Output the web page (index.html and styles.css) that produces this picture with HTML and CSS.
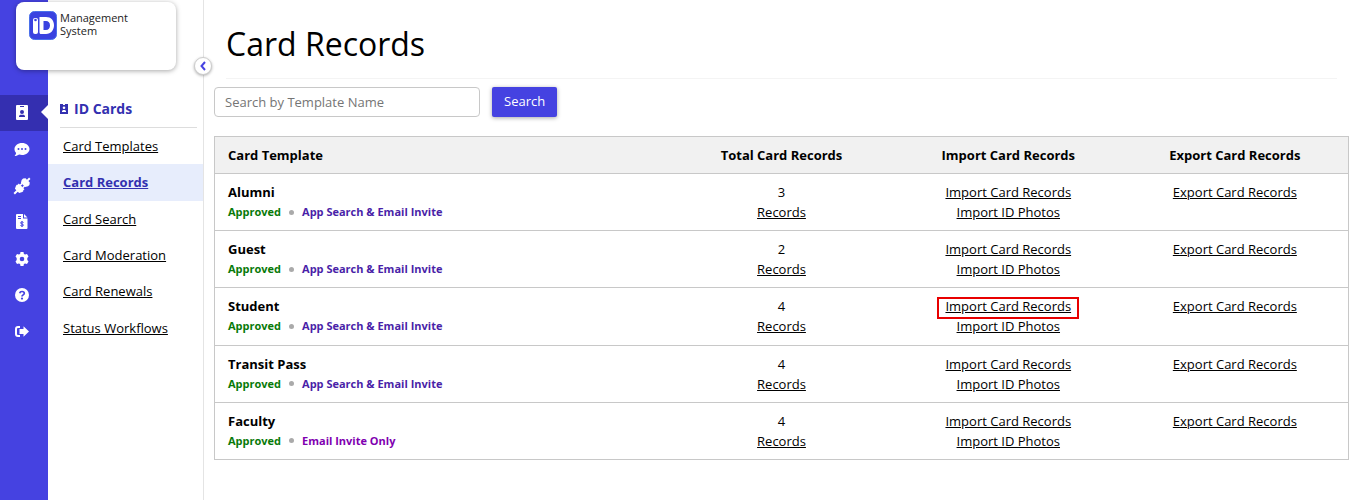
FILE: index.html
```html
<!DOCTYPE html>
<html lang="en">
<head>
    <meta charset="utf-8">
    <title>Card Records</title>
    <link rel="stylesheet" href="styles.css">
</head>
<body>
    <div class="rail">
        <nav class="rail-nav">
            <a href="#" class="active" aria-label="ID Cards">
                <svg width="12" height="16" viewBox="0 0 12 16"><path fill="#fff" fill-rule="evenodd" d="M1 0h10a1 1 0 0 1 1 1v13a1 1 0 0 1-1 1H1a1 1 0 0 1-1-1V1a1 1 0 0 1 1-1zM4 1v1h4V1zM6 5a2 2 0 1 0 0 4 2 2 0 0 0 0-4zM3 12h6v-.6C9 10.300 8 9.700 7 9.700H5c-1 0-2 .6-2 1.700z"/></svg>
            </a>
            <a href="#" aria-label="Messages">
                <svg width="16" height="14" viewBox="0 0 16 14"><path fill="#fff" d="M8 0c4.200 0 7.500 2.700 7.500 6S12.200 12 8 12c-1 0-2-.2-2.900-.5C4 12.300 2.300 13 .6 13c.8-.8 1.400-2 1.500-3C1.100 8.900.5 7.500.5 6 .5 2.700 3.800 0 8 0z"/><g fill="#4542e1"><circle cx="4.500" cy="6" r="1"/><circle cx="8" cy="6" r="1"/><circle cx="11.500" cy="6" r="1"/></g></svg>
            </a>
            <a href="#" aria-label="Integrations">
                <svg width="18" height="18" viewBox="0 0 18 18"><g transform="rotate(45 9 9)" fill="#fff"><path d="M8 -2h2v3h2l1.500 2v2L12 7.500H6L4.500 5V3L6 1h2z"/><path d="M6.500 7h1.500v3H6.500zM10 7h1.500v3H10z"/><path d="M5 9.500h8v2h.5v1.500L12 16h-2v4H8v-4H6l-1.500-3v-1.500H5z"/></g></svg>
            </a>
            <a href="#" aria-label="Billing">
                <svg width="12" height="16" viewBox="0 0 12 16"><path fill="#fff" d="M1 0h6v4.500h4.500V14a1 1 0 0 1-1 1H1a1 1 0 0 1-1-1V1a1 1 0 0 1 1-1zM8 0l3.500 3.500H8z"/><path fill="none" stroke="#4542e1" d="M2 2.500h3M2 4.500h3M7.500 8.500c-.5-.8-3-.8-3 .4 0 1.400 3 .8 3 2.200 0 1.200-2.500 1.200-3.100.3M6 7v6"/></svg>
            </a>
            <a href="#" aria-label="Settings">
                <svg width="14" height="14" viewBox="0 0 14 14"><path fill="#fff" fill-rule="evenodd" d="M5.500 0h3l.4 1.900 1.200.7 1.900-.6 1.500 2.500L12.300 6v2l1.200 1.500L12 12l-1.900-.6-1.200.7-.4 1.900h-3l-.4-1.900-1.200-.7L2 12 .5 9.500 1.700 8V6L.5 4.500 2 2l1.900.6 1.200-.7zM7 4.700a2.300 2.300 0 1 0 0 4.600 2.300 2.300 0 0 0 0-4.600z"/></svg>
            </a>
            <a href="#" aria-label="Help">
                <svg width="14" height="14" viewBox="0 0 14 14"><circle cx="7" cy="7" r="7" fill="#fff"/><path fill="none" stroke="#4542e1" stroke-width="1.700" d="M4.700 5.200C5 3.900 6 3.500 7 3.500c1.300 0 2.300.7 2.300 1.800C9.300 6.900 7 6.800 7 8.500"/><circle cx="7" cy="10.600" r="1.100" fill="#4542e1"/></svg>
            </a>
            <a href="#" aria-label="Log out">
                <svg width="14" height="12" viewBox="0 0 14 12"><path fill="none" stroke="#fff" stroke-width="2" d="M5 1H3a2 2 0 0 0-2 2v5a2 2 0 0 0 2 2h2"/><path fill="#fff" d="M8.500.3 14 5.500l-5.500 5.200V8H4.500V3h4z"/></svg>
            </a>
        </nav>
    </div>

    <aside class="sidebar">
        <div class="logo">
            <svg width="28" height="29" viewBox="0 0 28 29">
                <rect x=".5" y=".5" width="27" height="28" rx="5" fill="#3a42e0" stroke="#4a70ea"/>
                <rect x="4" y="7" width="5" height="16" rx="2" fill="#fff"/>
                <circle cx="6.500" cy="9" r="1.300" fill="#3a42e0"/>
                <path fill="#fff" fill-rule="evenodd" d="M10.500 6H17c5 0 8 3.500 8 8.200S22 23 17 23h-5c-1 0-1.500-.6-1.500-1.500zM14.500 10v9H17c2.500 0 4-2 4-4.600S19.500 10 17 10z"/>
            </svg>
            <span>Management<br>System</span>
        </div>
        <button class="collapse" aria-label="Collapse menu">
            <svg width="6" height="10" viewBox="0 0 6 10"><path fill="none" stroke="#4542e1" stroke-width="2" d="M5 1 1.500 5 5 9"/></svg>
        </button>
        <h2>
            <svg width="8" height="10" viewBox="0 0 8 10"><path fill="#3330b0" fill-rule="evenodd" d="M0 0h8v10H0zM3 0v1h2V0zM4 2.500a1.300 1.300 0 1 0 0 2.600 1.300 1.300 0 0 0 0-2.600zM2 8h4V7l-1-1H3L2 7z"/></svg>
            ID Cards
        </h2>
        <nav class="menu">
            <a href="#">Card Templates</a>
            <a href="#" class="active">Card Records</a>
            <a href="#">Card Search</a>
            <a href="#">Card Moderation</a>
            <a href="#">Card Renewals</a>
            <a href="#">Status Workflows</a>
        </nav>
    </aside>

    <main>
        <h1>Card Records</h1>
        <form class="search">
            <input type="text" placeholder="Search by Template Name" aria-label="Search by Template Name">
            <button type="button">Search</button>
        </form>
        <table>
            <thead>
                <tr>
                    <th class="template">Card Template</th>
                    <th>Total Card Records</th>
                    <th>Import Card Records</th>
                    <th>Export Card Records</th>
                </tr>
            </thead>
            <tbody>
                <tr>
                    <td class="template"><strong>Alumni</strong><div class="status"><span class="approved">Approved</span><i class="dot"></i><span class="invite">App Search &amp; Email Invite</span></div></td>
                    <td>3<br><a href="#">Records</a></td>
                    <td><a href="#">Import Card Records</a><br><a href="#">Import ID Photos</a></td>
                    <td><a href="#">Export Card Records</a></td>
                </tr>
                <tr>
                    <td class="template"><strong>Guest</strong><div class="status"><span class="approved">Approved</span><i class="dot"></i><span class="invite">App Search &amp; Email Invite</span></div></td>
                    <td>2<br><a href="#">Records</a></td>
                    <td><a href="#">Import Card Records</a><br><a href="#">Import ID Photos</a></td>
                    <td><a href="#">Export Card Records</a></td>
                </tr>
                <tr>
                    <td class="template"><strong>Student</strong><div class="status"><span class="approved">Approved</span><i class="dot"></i><span class="invite">App Search &amp; Email Invite</span></div></td>
                    <td>4<br><a href="#">Records</a></td>
                    <td><a href="#" class="highlight">Import Card Records</a><br><a href="#">Import ID Photos</a></td>
                    <td><a href="#">Export Card Records</a></td>
                </tr>
                <tr>
                    <td class="template"><strong>Transit Pass</strong><div class="status"><span class="approved">Approved</span><i class="dot"></i><span class="invite">App Search &amp; Email Invite</span></div></td>
                    <td>4<br><a href="#">Records</a></td>
                    <td><a href="#">Import Card Records</a><br><a href="#">Import ID Photos</a></td>
                    <td><a href="#">Export Card Records</a></td>
                </tr>
                <tr>
                    <td class="template"><strong>Faculty</strong><div class="status"><span class="approved">Approved</span><i class="dot"></i><span class="invite-only">Email Invite Only</span></div></td>
                    <td>4<br><a href="#">Records</a></td>
                    <td><a href="#">Import Card Records</a><br><a href="#">Import ID Photos</a></td>
                    <td><a href="#">Export Card Records</a></td>
                </tr>
            </tbody>
        </table>
    </main>
</body>
</html>
```
FILE: styles.css
```css
* {
    box-sizing: border-box;
}
body {
    font-family: "Open Sans", "Noto Sans", sans-serif;
    font-size: 13px;
    line-height: 20px;
    color: #000;
    background-color: #fff;
    margin: 0;
    display: flex;
    min-height: 100vh;
}
a {
    color: #000;
}
.rail {
    width: 48px;
    flex: none;
    background-color: #4542e1;
    padding-top: 95px;
}
.rail-nav {
    display: grid;
    grid-auto-rows: 1fr;
    height: 255px;
}
.rail-nav a {
    position: relative;
    display: flex;
    align-items: center;
    justify-content: center;
    padding-right: 5px;
}
.rail-nav a.active {
    background-color: #342fb0;
}
.rail-nav a.active::after {
    content: "";
    position: absolute;
    right: 0;
    top: 10px;
    border: 7px solid transparent;
    border-right-color: #fff;
    border-left: 0;
}
.sidebar {
    position: relative;
    width: 156px;
    flex: none;
    border-right: 1px solid #e4e4e4;
    padding-top: 99px;
}
.logo {
    position: absolute;
    top: 2px;
    left: -32px;
    width: 160px;
    height: 68px;
    display: flex;
    gap: 3px;
    padding: 8px 13px;
    background-color: #fff;
    border-radius: 8px;
    box-shadow: 0 1px 5px rgba(0, 0, 0, 0.35);
    font-size: 11px;
    line-height: 13px;
    padding-top: 9px;
    color: #222;
}
.collapse {
    position: absolute;
    top: 57px;
    right: -9px;
    width: 18px;
    height: 18px;
    padding: 0;
    display: flex;
    align-items: center;
    justify-content: center;
    background-color: #fff;
    border: 1px solid #ccc;
    border-radius: 50%;
    box-shadow: 0 1px 3px rgba(0, 0, 0, 0.3);
}
.sidebar h2 {
    margin: 0 6px 0 12px;
    padding-bottom: 8px;
    border-bottom: 1px solid #ddd;
    font-size: 14px;
    line-height: 20px;
    color: #3330b0;
    display: flex;
    align-items: center;
    gap: 6px;
}
.menu {
    display: grid;
    grid-auto-rows: 1fr;
    height: 218px;
}
.menu a {
    display: flex;
    align-items: center;
    padding-left: 15px;
}
.menu a.active {
    background-color: #e7edfc;
    color: #3330b0;
    font-weight: bold;
}
main {
    flex: 1;
    padding: 0 8px 0 10px;
}
h1 {
    margin: 0 12px 8px 12px;
    padding: 20px 0 10px;
    border-bottom: 1px solid #f4f4f4;
    font-size: 32px;
    font-weight: normal;
    line-height: 48px;
}
.search {
    display: flex;
    gap: 12px;
    margin-bottom: 19px;
}
.search input {
    width: 266px;
    height: 30px;
    padding: 0 10px;
    border: 1px solid #c8c8c8;
    border-radius: 4px;
    font: inherit;
}
.search input::placeholder {
    color: #757575;
}
.search button {
    height: 30px;
    padding: 0 12px 2px;
    border: none;
    border-radius: 2px;
    background-color: #4542e1;
    color: #fff;
    font: inherit;
    box-shadow: 0 1px 4px rgba(0, 0, 0, 0.35);
}
table {
    width: 100%;
    height: 324px;
    table-layout: fixed;
    border-collapse: collapse;
    border: 1px solid #c8c8c8;
}
th, td {
    width: 20%;
    padding: 8px 13px;
    border-bottom: 1px solid #c8c8c8;
    text-align: center;
    vertical-align: top;
}
th {
    background-color: #f1f1f1;
}
.template {
    width: 40%;
    text-align: left;
}
.status {
    display: flex;
    align-items: center;
    gap: 8px;
    font-size: 11px;
    font-weight: bold;
}
.dot {
    width: 5px;
    height: 5px;
    border-radius: 50%;
    background-color: #aaa;
}
.approved {
    color: #087a08;
}
.invite {
    color: #4a1fa8;
}
.invite-only {
    color: #8000b0;
}
.highlight {
    padding: 0 8px 4px;
    box-shadow: inset 0 0 0 2px #e80000;
}
```
